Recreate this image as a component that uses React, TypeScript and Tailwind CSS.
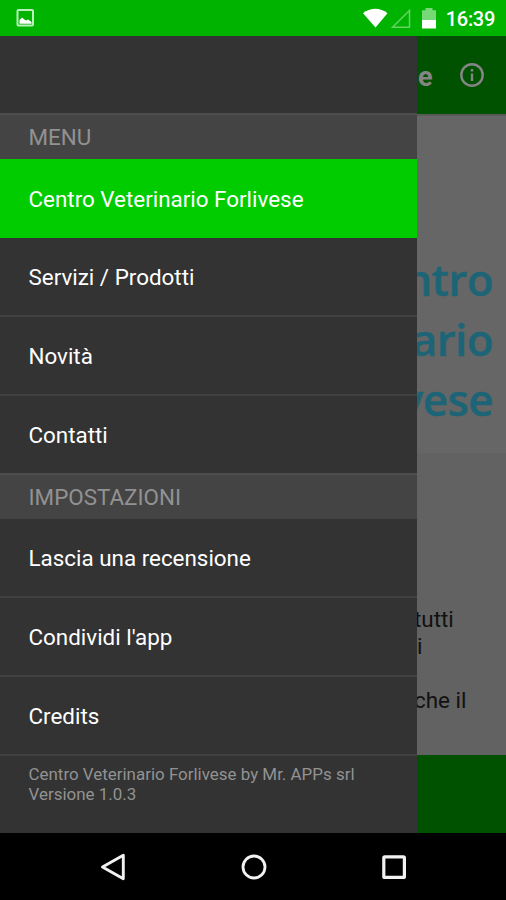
import type { ReactNode } from "react";

function StatusBar() {
  return (
    <header className="flex h-9 shrink-0 items-center bg-[#00b300] pl-4 pr-[11px]">
      <svg width="20" height="20" viewBox="0 0 20 20" className="mt-px shrink-0">
        <rect x="1.5" y="1" width="15.500" height="15.500" rx="1" fill="none" stroke="#b9f0b9" strokeWidth="2" />
        <path d="M3.500 14.800V11l2.500-2.500 2.500 2 1.500 1 2-1 3.500 2.500v1.800z" fill="#fff" />
      </svg>
      <div className="ml-auto flex items-center">
        <svg width="76" height="24" viewBox="0 0 76 24">
          <path d="M0 7.200C7 1.100 17.500 1.100 24.500 7.200L12.500 21.500z" fill="#fff" />
          <path d="M29.500 21.300L46.500 4.500V21.300z" fill="none" stroke="#62d362" strokeWidth="1.500" />
          <path d="M59 4.200h3.500V2h7v2.200H73V14H59z" fill="#76d976" />
          <path d="M59 14h14v8.500H59z" fill="#fff" />
        </svg>
        <span className="ml-[7px] pt-px text-[20px] font-medium leading-6 tracking-[-0.3px] text-white">16:39</span>
      </div>
    </header>
  );
}

function SectionTitle({ children }: { children: ReactNode }) {
  return (
    <h2 className="flex h-[46px] shrink-0 items-center border-t-2 border-[#4d4d4d] bg-[#444] px-[28.5px] pt-[2px] text-[22.4px] text-[#929292]">
      {children}
    </h2>
  );
}

function Item({ children, active, last }: { children: ReactNode; active?: boolean; last?: boolean }) {
  return (
    <li
      className={
        "flex items-center whitespace-nowrap px-[28.5px] pt-[2px] text-[22.4px] text-white " +
        (active
          ? "h-[79px] bg-[#00cc00]"
          : last
            ? "h-[77px]"
            : "h-[79px] border-b-2 border-[#414141]")
      }
    >
      {children}
    </li>
  );
}

function Drawer() {
  return (
    <nav className="flex w-[417px] shrink-0 flex-col bg-[#333]">
      <div className="h-[77px] shrink-0" />
      <SectionTitle>MENU</SectionTitle>
      <ul className="flex h-[314px] shrink-0 flex-col">
        <Item active>Centro Veterinario Forlivese</Item>
        <Item>Servizi / Prodotti</Item>
        <Item>Novità</Item>
        <Item last>Contatti</Item>
      </ul>
      <SectionTitle>IMPOSTAZIONI</SectionTitle>
      <ul className="flex h-[237px] shrink-0 flex-col">
        <Item>Lascia una recensione</Item>
        <Item>Condividi l'app</Item>
        <Item>Credits</Item>
      </ul>
      <p className="px-[28.5px] pt-2 text-[16.95px] leading-[20px] text-[#929292]">
        Centro Veterinario Forlivese by Mr. APPs srl
        <br />
        Versione 1.0.3
      </p>
    </nav>
  );
}

function PageBehind() {
  return (
    <main className="flex min-w-0 grow flex-col overflow-hidden bg-[#626262]">
      <div className="flex h-[78px] shrink-0 items-center bg-[#005200] text-[#858585]">
        <span className="pl-px pt-1 text-[27px] font-bold leading-8">e</span>
        <svg width="26" height="26" viewBox="0 0 26 26" className="ml-[26px] shrink-0">
          <circle cx="13" cy="13" r="10.700" fill="none" stroke="#858585" strokeWidth="2.400" />
          <path d="M11.800 11.500h2.400V19h-2.400zM11.800 7h2.400v2.400h-2.400z" fill="#858585" />
        </svg>
      </div>
      <div className="flex h-[339px] shrink-0 flex-col items-end border-t-2 border-[#595959] bg-[#666] pr-[13px] pt-[133px] font-['Open_Sans',sans-serif] text-[44px] font-semibold leading-[60px] tracking-[-0.6px] text-[#1d6576] [-webkit-text-stroke:0.5px_#1d6576]">
        <span>ntro</span>
        <span>ario</span>
        <span>vese</span>
      </div>
      <div className="flex grow flex-col whitespace-nowrap pt-[153px] text-[22.4px] leading-[27px] text-[#111]">
        <span className="-ml-[3px]">tutti</span>
        <span>i</span>
        <span className="-ml-[3px] mt-[27px]">che il</span>
      </div>
      <div className="h-[78px] shrink-0 bg-[#005200]" />
    </main>
  );
}

function SystemNav() {
  return (
    <footer className="flex h-[67px] shrink-0 items-center justify-between bg-black pl-[99px] pr-[98px]">
      <svg width="28" height="30" viewBox="0 0 28 30">
        <path d="M3.500 15L24.300 3.200V26.800z" fill="none" stroke="#f2f2f2" strokeWidth="2.900" strokeLinejoin="round" />
      </svg>
      <svg width="28" height="28" viewBox="0 0 28 28">
        <circle cx="14" cy="14" r="11" fill="none" stroke="#f2f2f2" strokeWidth="2.800" />
      </svg>
      <svg width="28" height="28" viewBox="0 0 28 28">
        <rect x="3.800" y="3.800" width="20.600" height="20.600" rx="1" fill="none" stroke="#f2f2f2" strokeWidth="3.200" />
      </svg>
    </footer>
  );
}

export default function App() {
  return (
    <div className="flex h-[900px] w-[506px] flex-col overflow-hidden font-['Roboto',sans-serif]">
      <StatusBar />
      <div className="flex h-[797px] shrink-0">
        <Drawer />
        <PageBehind />
      </div>
      <SystemNav />
    </div>
  );
}
